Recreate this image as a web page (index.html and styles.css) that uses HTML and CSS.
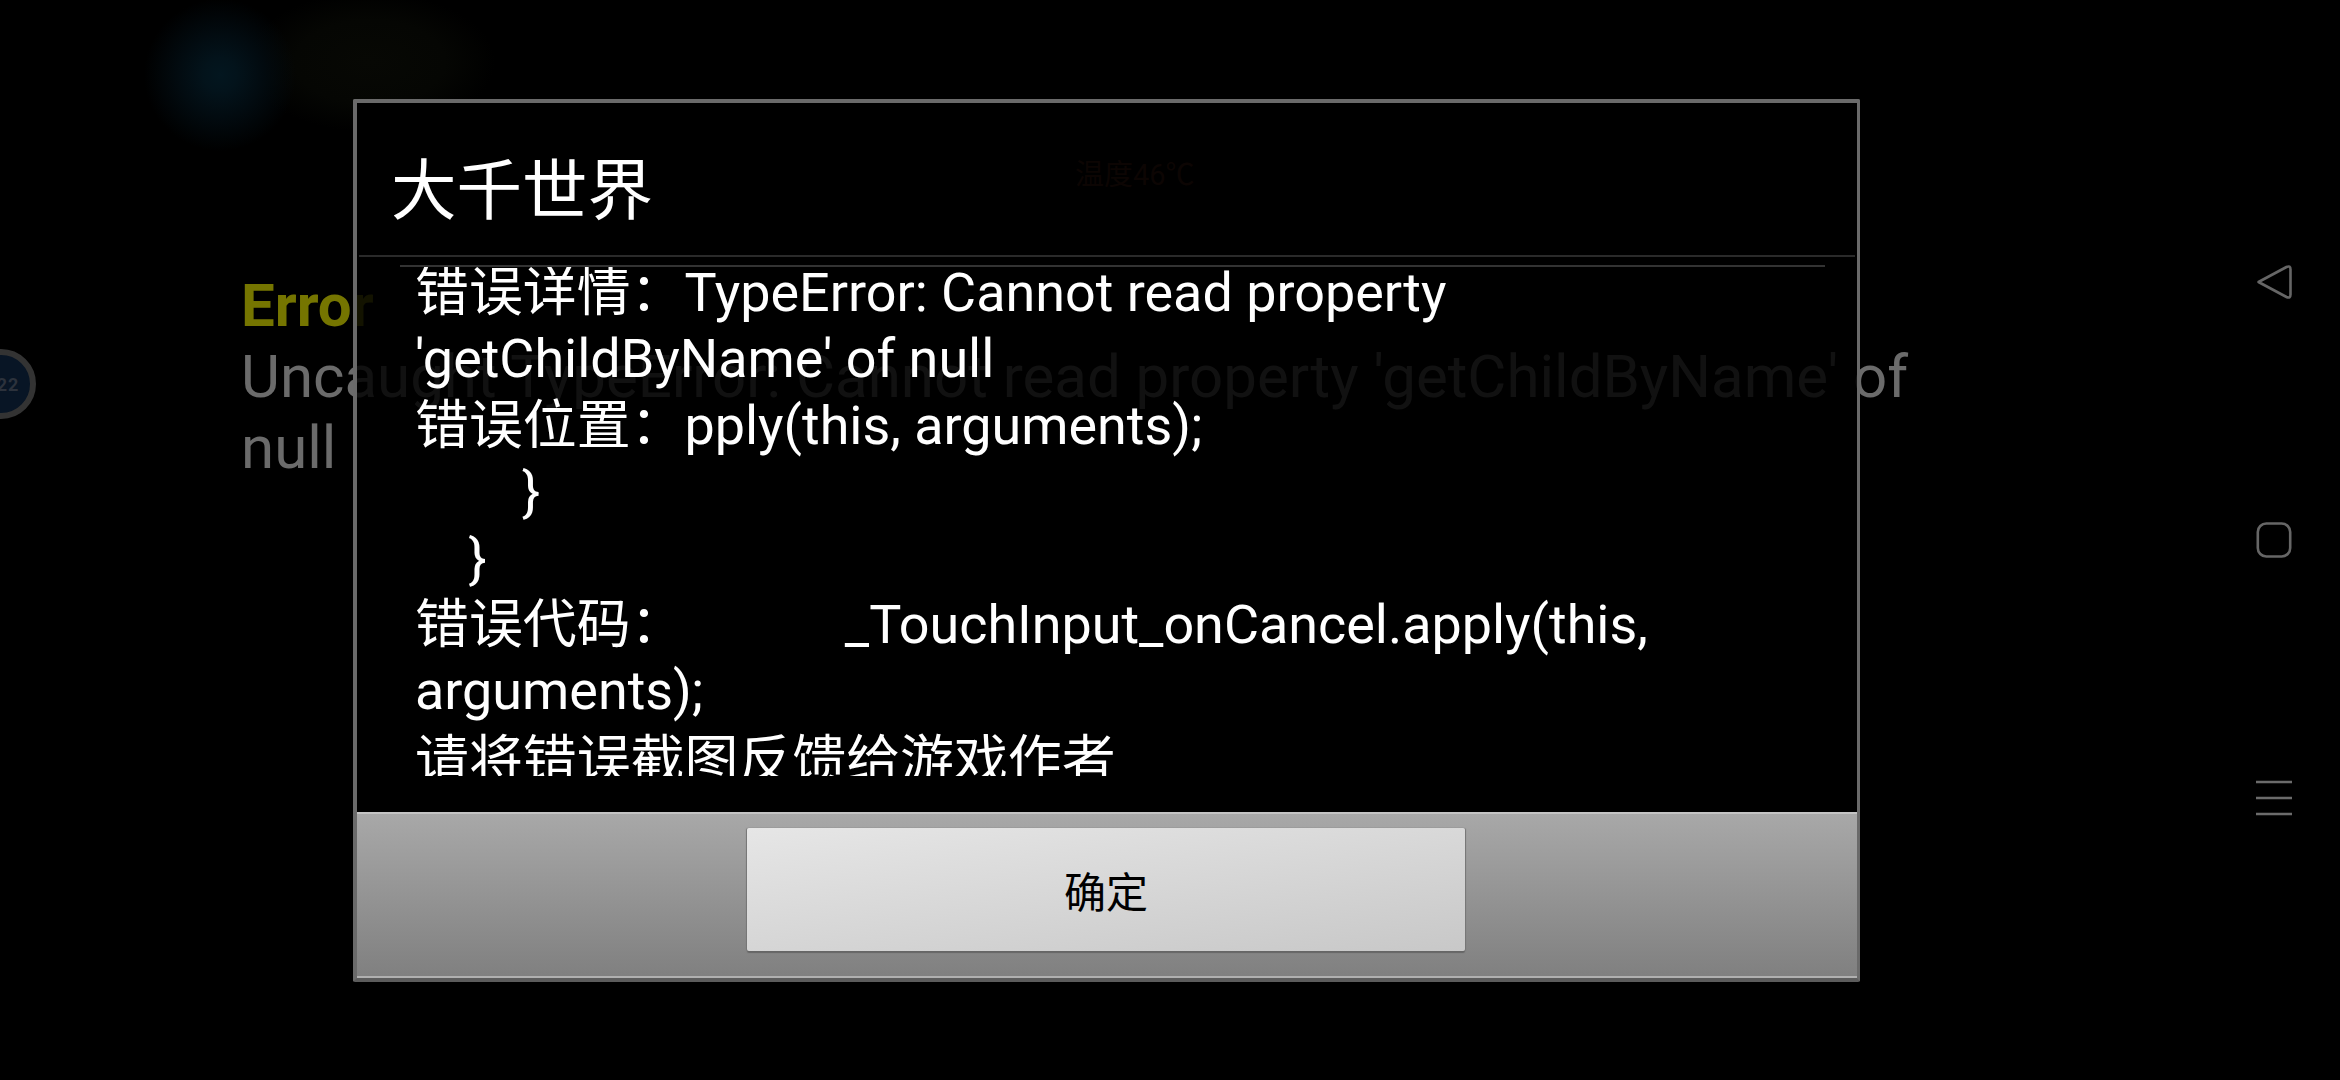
FILE: index.html
```html
<!DOCTYPE html>
<html lang="zh-CN">
<head>
<meta charset="utf-8">
<title>大千世界</title>
<link rel="stylesheet" href="styles.css">
</head>
<body>
<div class="screen">
  <main class="game">
    <div class="badge"><span class="badge-num">22</span></div>
    <div class="temp">温度46℃</div>
    <section class="log">
      <h2 class="log-title">Error</h2>
      <p class="log-text">Uncaught TypeError: Cannot read property 'getChildByName' of null</p>
    </section>
  </main>
  <nav class="rail">
    <svg class="nav-icon" width="36" height="36" viewBox="0 0 36 36"><path d="M2.5 18 L30.5 3 Q34.5 1.2 34.5 5.5 L34.5 30.5 Q34.5 34.8 30.5 33 Z" fill="none" stroke="#666" stroke-width="2.6" stroke-linejoin="round"/></svg>
    <svg class="nav-icon" width="36" height="36" viewBox="0 0 36 36"><rect x="1.8" y="1.5" width="32.4" height="33" rx="8.5" fill="none" stroke="#666" stroke-width="2.6"/></svg>
    <svg class="nav-icon" width="36" height="36" viewBox="0 0 36 36"><path d="M0 2 H36 M0 18 H36 M0 34 H36" fill="none" stroke="#6b6b6b" stroke-width="2.6"/></svg>
  </nav>
  <div class="dialog">
    <header class="dialog-head">
      <h1 class="dialog-title">大千世界</h1>
    </header>
    <div class="dialog-body">
      <div class="dialog-rule"></div>
      <div class="dialog-scroll"><div class="dialog-msg">错误详情：TypeError: Cannot read property 'getChildByName' of null
错误位置：pply(this, arguments);
        }
    }
错误代码：            _TouchInput_onCancel.apply(this, arguments);</div><div class="dialog-msg-end">请将错误截图反馈给游戏作者</div></div>
    </div>
    <footer class="dialog-foot">
      <button class="dialog-btn" type="button">确定</button>
    </footer>
  </div>
</div>
</body>
</html>
```
FILE: styles.css
```css
* { box-sizing: border-box; }
html, body { margin: 0; padding: 0; background: #000; }
body { font-family: Roboto, "Noto Sans CJK SC", sans-serif; }

.screen {
  position: relative;
  display: flex;
  width: 2340px;
  height: 1080px;
  overflow: hidden;
  background:
    radial-gradient(circle 76px at 220px 75px, #03161f 0%, #03131b 22%, #020b10 55%, rgba(1,4,5,0) 100%),
    radial-gradient(ellipse 125px 70px at 370px 62px, #070804 0%, #050603 60%, rgba(4,5,2,0) 100%),
    #000;
}

.game {
  position: relative;
  flex: 1;
  display: flex;
  flex-direction: column;
  padding: 156px 0 0 241px;
}
.badge {
  position: absolute;
  left: -34px;
  top: 349px;
  width: 70px;
  height: 70px;
  border-radius: 50%;
  border: 6px solid #333;
  background: #081525;
  display: flex;
  align-items: center;
  justify-content: center;
}
.badge-num { color: #2c323c; font-size: 18px; font-weight: 700; letter-spacing: 1px; margin-left: 14px; }
.temp {
  margin-left: 834px;
  font-size: 29px;
  line-height: 38px;
  color: #4a2018;
}
.log { width: 1700px; margin-top: 76px; }
.log-title { margin: 0; font-size: 60px; line-height: 71px; font-weight: 700; color: #757500; }
.log-text { margin: 0; font-size: 60px; line-height: 71px; font-weight: 400; color: #6b6b6b; }

.rail {
  width: 132px;
  height: 100%;
  padding: 264px 48px 0 48px;
  display: flex;
  flex-direction: column;
  align-items: center;
  gap: 222px;
}
.nav-icon { display: block; flex: none; }

.dialog {
  position: absolute;
  left: 353px;
  top: 99px;
  width: 1507px;
  height: 883px;
  display: flex;
  flex-direction: column;
  border: 4px solid #6a6a6a;
  border-right-width: 3px;
  border-bottom-color: #5c5c5c;
  border-radius: 2px;
  background: rgba(0,0,0,.84);
}
.dialog-head {
  height: 154px;
  padding: 26px 0 0 34px;
  border-bottom: 2px solid #2a2a2a;
  margin: 0 2px;
  display: flex;
  align-items: center;
}
.dialog-title { margin: 0 0 0 -2px; font-size: 65.5px; line-height: 80px; font-weight: 400; color: #fff; }
.dialog-body { flex: 1; padding: 8px 32px 36px 43px; display: flex; flex-direction: column; min-height: 0; }
.dialog-rule { height: 2px; background: #333; flex: none; }
.dialog-scroll { flex: 1; overflow: hidden; padding-left: 15px; min-height: 0; }
.dialog-msg {
  white-space: pre-wrap;
  font-size: 53.9px;
  line-height: 66.4px;
  color: #fff;
  margin-top: -7px;
}
.dialog-msg-end {
  font-size: 53.9px;
  line-height: 66.4px;
  color: #fff;
  margin-top: 3px;
}
.dialog-foot {
  flex: none;
  height: 166px;
  display: flex;
  justify-content: center;
  padding-top: 14px;
  padding-right: 2px;
  background: linear-gradient(#a8a8a8, #808080);
  border-top: 2px solid #c4c4c4;
  border-bottom: 2px solid #b0b0b0;
}
.dialog-btn {
  width: 718px;
  height: 123px;
  padding: 0;
  border: 0;
  border-radius: 2px;
  font-family: inherit;
  font-size: 42px;
  color: #000;
  background: linear-gradient(172deg, #e6e6e6, #c8c8c8);
  box-shadow: 0 2px 1px #666, 1px 0 1px #777, -1px 0 1px #777;
}
```
